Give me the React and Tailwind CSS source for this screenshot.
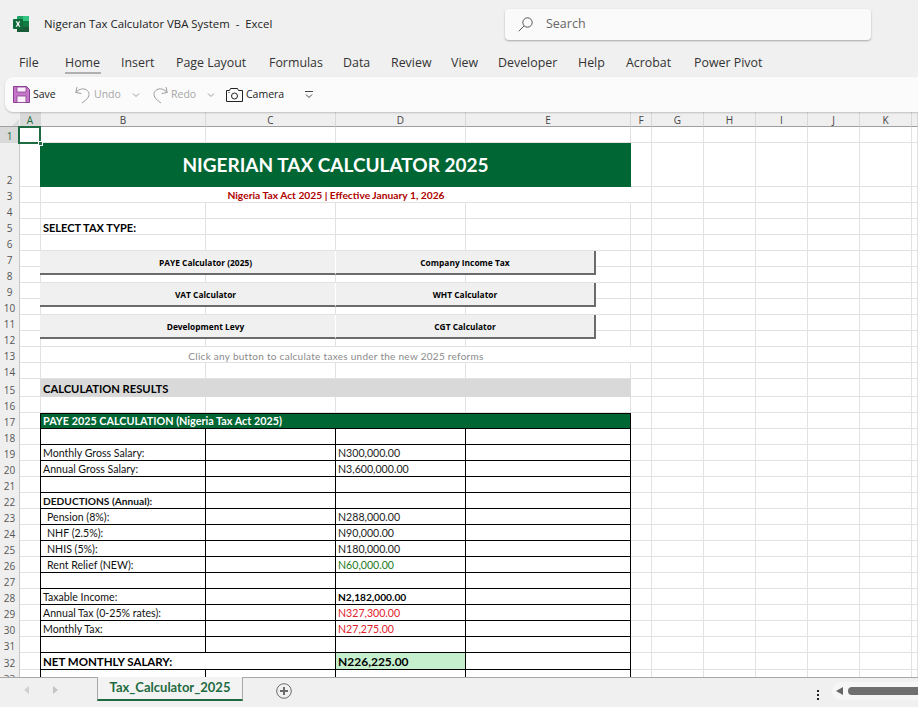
import React from "react";

const colW = "grid-cols-[20px_21px_165px_130px_130px_165px_21px_52px_52px_52px_52px_52px_6px]";
const letters = ["A", "B", "C", "D", "E", "F", "G", "H", "I", "J", "K", ""];
const rowHeights = { 2: 44, 15: 18, 32: 17 };
const rowNums = Array.from({ length: 33 }, (_, i) => i + 1);
const cols = Array.from({ length: 12 }, (_, i) => i + 2);
const tableCol = (c) => c >= 3 && c <= 6;
const tableRow = (r) => r >= 18 && r <= 33;

function Place({ r, c, span = 1, rowSpan = 1, className = "", children }) {
  return (
    <div
      className={className}
      style={{ gridRow: `${r + 1} / span ${rowSpan}`, gridColumn: `${c} / span ${span}` }}
    >
      {children}
    </div>
  );
}

function SheetButton({ r, c, label, right }) {
  return (
    <Place
      r={r}
      c={c}
      span={2}
      rowSpan={2}
      className={`z-10 mb-[8px] flex items-center justify-center pt-[2px] bg-[#f0f0f0] border-b-2 border-[#6b6b6b] font-['Open_Sans',sans-serif] text-[8.4px] font-bold text-black ${right ? "mr-[35px] border-r-2" : "-ml-px pl-[36px] border-r border-r-white"}`}
    >
      {label}
    </Place>
  );
}

const labels = [
  [19, "Monthly Gross Salary:", "text-[10.6px]"],
  [20, "Annual Gross Salary:", "text-[10.6px]"],
  [22, "DEDUCTIONS (Annual):", "font-bold text-[10.2px]"],
  [23, "Pension (8%):", "pl-[6px] text-[10.6px]"],
  [24, "NHF (2.5%):", "pl-[6px] text-[10.6px]"],
  [25, "NHIS (5%):", "pl-[6px] text-[10.6px]"],
  [26, "Rent Relief (NEW):", "pl-[6px] text-[10.6px]"],
  [28, "Taxable Income:", "text-[10.6px]"],
  [29, "Annual Tax (0-25% rates):", "text-[10.6px]"],
  [30, "Monthly Tax:", "text-[10.6px]"],
];
const values = [
  [19, "N300,000.00", "text-[#222222] text-[10.6px]"],
  [20, "N3,600,000.00", "text-[#222222] text-[10.6px]"],
  [23, "N288,000.00", "text-[#222222] text-[10.6px]"],
  [24, "N90,000.00", "text-[#222222] text-[10.6px]"],
  [25, "N180,000.00", "text-[#222222] text-[10.6px]"],
  [26, "N60,000.00", "text-[#1e7b1e] text-[10.6px]"],
  [28, "N2,182,000.00", "font-bold text-black text-[10.2px]"],
  [29, "N327,300.00", "text-[#e0202c] text-[10.6px]"],
  [30, "N27,275.00", "text-[#e0202c] text-[10.6px]"],
];

function Sheet() {
  return (
    <div
      className={`grid ${colW} flex-1 min-h-0 overflow-hidden bg-white font-['Lato',sans-serif] text-[10px] leading-none`}
      style={{ gridTemplateRows: `15px ${rowNums.map((r) => `${rowHeights[r] || 16}px`).join(" ")}` }}
    >
      {/* column headers */}
      <div className="relative bg-[#efefef] border-b border-[#9e9e9e]">
        <svg className="absolute left-[12px] top-[7px]" width="7" height="7" viewBox="0 0 7 7">
          <path d="M7 0v7H0z" fill="#dcdcdc" />
        </svg>
      </div>
      {letters.map((l, i) => (
        <div
          key={i}
          className={`flex items-center justify-center pt-[1px] border-b border-r border-b-[#9e9e9e] border-r-[#d8d8d8] font-['Open_Sans',sans-serif] text-[10px] ${i === 0 ? "bg-[#d9d9d9] text-[#1d6b3c]" : "bg-[#efefef] text-[#444444]"}`}
        >
          {l}
        </div>
      ))}

      {/* row headers */}
      {rowNums.map((r) => (
        <Place
          key={`h${r}`}
          r={r}
          c={1}
          className={`flex items-end justify-center pb-[2px] border-r border-[#c8c8c8] font-['Open_Sans',sans-serif] text-[10px] ${r === 1 ? "bg-[#d9d9d9] text-[#1d6b3c]" : "bg-[#efefef] text-[#555555]"}`}
        >
          {r}
        </Place>
      ))}

      {/* cell grid */}
      {rowNums.flatMap((r) =>
        cols.map((c) => {
          const black = tableRow(r) && tableCol(c);
          return (
            <Place
              key={`${r}-${c}`}
              r={r}
              c={c}
              className={`border-b border-r ${black ? "border-black" : "border-[#e2e2e2]"} ${r === 17 && c === 2 ? "border-r-black" : ""} ${tableRow(r) && c === 2 ? "border-r-black" : ""}`}
            />
          );
        })
      )}

      {/* selected cell A1 */}
      <Place r={1} c={2} className="relative z-20">
        <div className="absolute left-[-2px] top-[-1px] h-[18px] w-[23px] border-2 border-[#1f6b41]" />
        <div className="absolute left-[18px] top-[14px] h-[5px] w-[5px] bg-[#1f6b41] border border-white" />
      </Place>

      {/* title */}
      <Place
        r={2}
        c={3}
        span={4}
        className="z-10 -ml-px flex items-center justify-center pb-[2px] bg-[#006633] text-[19px] font-bold text-white"
      >
        NIGERIAN TAX CALCULATOR 2025
      </Place>
      <Place
        r={3}
        c={3}
        span={4}
        className="z-10 flex items-center justify-center pt-[1px] bg-white border-b border-[#e2e2e2] text-[10.25px] font-bold text-[#b00000]"
      >
        Nigeria Tax Act 2025 | Effective January 1, 2026
      </Place>
      <Place r={5} c={3} span={2} className="z-10 flex items-center pl-[2px] text-[11px] font-bold text-black">
        SELECT TAX TYPE:
      </Place>

      {/* buttons */}
      <SheetButton r={7} c={3} label="PAYE Calculator (2025)" />
      <SheetButton r={7} c={5} label="Company Income Tax" right />
      <SheetButton r={9} c={3} label="VAT Calculator" />
      <SheetButton r={9} c={5} label="WHT Calculator" right />
      <SheetButton r={11} c={3} label="Development Levy" />
      <SheetButton r={11} c={5} label="CGT Calculator" right />

      <Place
        r={13}
        c={3}
        span={4}
        className="z-10 flex items-center justify-center pt-[2px] bg-white border-b border-[#e2e2e2] text-[10px] tracking-[0.28px] text-[#8a8a8a]"
      >
        Click any button to calculate taxes under the new 2025 reforms
      </Place>

      <Place
        r={15}
        c={3}
        span={4}
        className="z-10 -ml-px flex items-center pl-[3px] pt-[2px] bg-[#d9d9d9] text-[11.2px] font-bold text-black"
      >
        CALCULATION RESULTS
      </Place>

      <Place
        r={17}
        c={3}
        span={4}
        className="z-10 flex items-center pl-[2px] bg-[#006633] border-b border-r border-t border-black text-[10.8px] font-bold text-white"
      >
        PAYE 2025 CALCULATION (Nigeria Tax Act 2025)
      </Place>

      {/* left table edge */}
      <Place r={17} c={2} rowSpan={17} className="z-10 border-r border-black" />

      {labels.map(([r, t, cls]) => (
        <Place key={t} r={r} c={3} className={`z-10 flex items-center pl-[2px] pt-[1px] text-[#111111] ${cls}`}>
          {t}
        </Place>
      ))}
      {values.map(([r, t, cls]) => (
        <Place key={t} r={r} c={5} className={`z-10 flex items-center pl-[2px] pt-[1px] ${cls}`}>
          {t}
        </Place>
      ))}

      <Place
        r={32}
        c={3}
        span={2}
        className="z-10 flex items-center pl-[2px] pt-[1px] bg-white border-b border-r border-black text-[11.5px] font-bold text-black"
      >
        NET MONTHLY SALARY:
      </Place>
      <Place
        r={32}
        c={5}
        className="z-10 flex items-center pl-[2px] pt-[1px] bg-[#c6efce] border-b border-r border-black text-[12px] font-bold text-black"
      >
        N226,225.00
      </Place>
    </div>
  );
}

function ExcelLogo() {
  return (
    <svg width="17" height="17" viewBox="0 0 17 17">
      <rect x="5" y="0" width="12" height="16" rx="1" fill="#21a366" />
      <rect x="11" y="0" width="6" height="5" fill="#33c481" />
      <rect x="11" y="5" width="6" height="5.5" fill="#107c41" />
      <rect x="5" y="10.5" width="12" height="5.5" fill="#185c37" />
      <rect x="1" y="3" width="10" height="10" rx="1" fill="#0f6b3a" />
      <path d="M3.6 5.2h1.4L6 7l1-1.8h1.3L6.8 8l1.6 2.8H7L6 8.9l-1 1.9H3.6L5.2 8z" fill="#fff" />
    </svg>
  );
}

const tabs = [
  ["File", "w-[65px] pl-[19px]"],
  ["Home", "w-[56px]"],
  ["Insert", "w-[55px]"],
  ["Page Layout", "w-[93px]"],
  ["Formulas", "w-[74px]"],
  ["Data", "w-[48px]"],
  ["Review", "w-[60px]"],
  ["View", "w-[47px]"],
  ["Developer", "w-[80px]"],
  ["Help", "w-[48px]"],
  ["Acrobat", "w-[68px]"],
  ["Power Pivot", "w-[90px]"],
];

function TabRow() {
  return (
    <div className="flex h-[29px] items-start pt-[6px] font-['Open_Sans',sans-serif] text-[12.4px] leading-[17px] text-[#333333]">
      {tabs.map(([t, w]) => (
        <div key={t} className={`${w} shrink-0 whitespace-nowrap`}>
          <span className={t === "Home" ? "inline-block border-b-2 border-[#b0b0b0] pb-[1px] pr-[1px]" : ""}>{t}</span>
        </div>
      ))}
    </div>
  );
}

function Chevron() {
  return (
    <svg width="8" height="6" viewBox="0 0 8 6" fill="none" stroke="#9a9a9a" strokeWidth="1">
      <path d="M1 1.5l3 3 3-3" />
    </svg>
  );
}

function QuickAccess() {
  return (
    <div className="ml-[5px] flex h-[35px] items-center rounded-l-[8px] bg-[#fbfbfb] pl-[8px] shadow-[0_1px_2px_rgba(0,0,0,0.2)] relative z-30 font-['Open_Sans',sans-serif] text-[10.5px]">
      <svg width="17" height="17" viewBox="0 0 17 17" fill="none">
        <path d="M.5.5h13l3 3v13H.5z" fill="#c678c8" stroke="#8a3f94" />
        <rect x="4" y="1" width="9" height="5" fill="#fbeefb" stroke="#8a3f94" strokeWidth=".8" />
        <rect x="4" y="10" width="9" height="6.5" fill="#fbeefb" stroke="#8a3f94" strokeWidth=".8" />
      </svg>
      <span className="ml-[3px] w-[24px] pt-[1px] text-[#222222]">Save</span>
      <svg className="ml-[18px]" width="16" height="20" viewBox="0 0 16 20" fill="none" stroke="#9c9c9c" strokeWidth="1">
        <path d="M2 2L.8 7.5l5.5 1" />
        <path d="M.8 7.5C3.5 4.5 7 3.2 10 4.2c3.5 1.2 5 4.5 3.3 7.8-1.2 2.3-3.8 4.2-6.3 6" />
      </svg>
      <span className="ml-[3px] w-[31px] pt-[1px] text-[#a6a6a6]">Undo</span>
      <span className="ml-[7px] flex"><Chevron /></span>
      <svg className="ml-[12px]" width="16" height="20" viewBox="0 0 16 20" fill="none" stroke="#9c9c9c" strokeWidth="1">
        <path d="M14 2l1.2 5.5-5.5 1" />
        <path d="M15.2 7.5C12.5 4.5 9 3.2 6 4.2 2.5 5.4 1 8.7 2.7 12c1.2 2.3 3.8 4.2 6.3 6" />
      </svg>
      <span className="ml-[3px] w-[29px] pt-[1px] text-[#a6a6a6]">Redo</span>
      <span className="ml-[7px] flex"><Chevron /></span>
      <svg className="ml-[11px]" width="17" height="14" viewBox="0 0 17 14" fill="none" stroke="#222222" strokeWidth="1">
        <path d="M.5 2.5h3l1-2h7l1 2h4v11H.5z" />
        <circle cx="8.5" cy="8" r="3" />
        <rect x="2.5" y="4" width="1" height="1" fill="#222222" stroke="none" />
      </svg>
      <span className="ml-[3px] w-[41px] pt-[1px] text-[#222222]">Camera</span>
      <svg className="ml-[18px]" width="8" height="8" viewBox="0 0 8 8" fill="none" stroke="#444444" strokeWidth="1">
        <path d="M0 .5h8" />
        <path d="M1 3.5l3 3 3-3" />
      </svg>
    </div>
  );
}

function BottomBar() {
  return (
    <div className="relative z-30 flex h-[30px] items-start border-t border-[#a8a8a8] bg-[#f0f0f0]">
      <svg className="ml-[24px] mt-[8px]" width="5" height="8" viewBox="0 0 5 8"><path d="M5 0v8L0 4z" fill="#d0d0d0" /></svg>
      <svg className="ml-[24px] mt-[8px]" width="5" height="8" viewBox="0 0 5 8"><path d="M0 0v8l5-4z" fill="#c4c4c4" /></svg>
      <div className="ml-[39px] mt-[-1px] flex h-[24px] w-[146px] items-center justify-center border-x border-b-2 border-x-[#a8a8a8] border-b-[#1f6b41] bg-[#f3f3f3] font-['Lato',sans-serif] text-[13px] font-bold text-[#1f6b41]">
        Tax_Calculator_2025
      </div>
      <svg className="ml-[33px] mt-[5px]" width="16" height="16" viewBox="0 0 16 16" fill="none" stroke="#6b6b6b">
        <circle cx="8" cy="8" r="7.3" />
        <path strokeWidth="2" d="M8 4v8M4 8h8" />
      </svg>
      <div className="ml-auto mt-[12px] mr-[99px] flex flex-col gap-[2px]">
        <div className="h-[2px] w-[2px] bg-[#222222]" />
        <div className="h-[2px] w-[2px] bg-[#222222]" />
        <div className="h-[2px] w-[2px] bg-[#222222]" />
      </div>
      <div className="absolute left-[832px] top-[4px] h-[18px] w-[86px] rounded-l-full bg-[#f6f6f6]" />
      <svg className="absolute left-[836px] top-[9px]" width="7" height="8" viewBox="0 0 7 8"><path d="M7 0v8L0 4z" fill="#666666" /></svg>
      <div className="absolute left-[848px] top-[9px] h-[8px] w-[70px] rounded-l-full bg-[#6f6f6f]" />
    </div>
  );
}

export default function App() {
  return (
    <div className="flex h-[707px] w-[918px] flex-col overflow-hidden bg-[#f0f0f0]">
      <div className="flex h-[48px] items-center">
        <div className="ml-[12px]"><ExcelLogo /></div>
        <div className="ml-[15px] w-[460px] whitespace-pre font-['Open_Sans',sans-serif] text-[11.4px] text-[#222222]">
          Nigeran Tax Calculator VBA System  -  Excel
        </div>
        <div className="ml-[1px] flex h-[31px] w-[366px] items-center rounded-[4px] bg-[#fafafa] pl-[13px] shadow-[0_1px_2px_rgba(0,0,0,0.3)]">
          <svg width="15" height="15" viewBox="0 0 15 15" fill="none" stroke="#555555" strokeWidth="1">
            <circle cx="9.5" cy="5.5" r="4.7" />
            <path d="M6 9L.8 14.2" />
          </svg>
          <span className="ml-[13px] font-['Open_Sans',sans-serif] text-[12.5px] text-[#666666]">Search</span>
        </div>
      </div>
      <TabRow />
      <QuickAccess />
      <Sheet />
      <BottomBar />
    </div>
  );
}
